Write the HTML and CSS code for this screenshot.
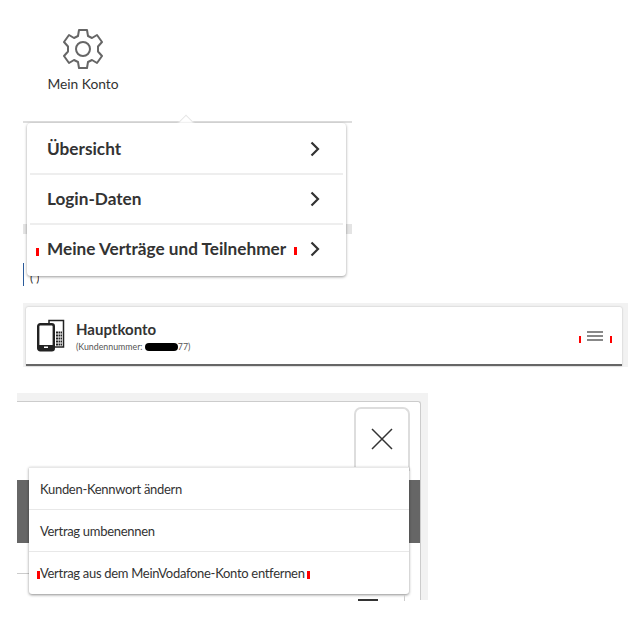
FILE: index.html
```html
<!DOCTYPE html>
<html lang="de">
<head>
  <meta charset="UTF-8">
  <title>Mein Konto</title>
  <link rel="stylesheet" href="styles.css">
</head>
<body>
  <!-- Mein Konto dropdown -->
  <section class="account">
    <div class="account-link">
      <svg class="gear" width="40" height="40" viewBox="0 0 40 40" fill="none" stroke="#666" stroke-width="2" stroke-linejoin="round">
        <path d="M16 1h8l1 6 4 2 5-3 5 7-4 4.500v5l4 4.500-5 7-5-3-4 2-1 6h-8l-1-6-4-2-5 3-5-7 4-4.500v-5l-4-4.500 5-7 5 3 4-2z"/>
        <circle cx="20" cy="20" r="7"/>
      </svg>
      <span class="account-label">Mein Konto</span>
    </div>
    <div class="account-menu-wrap">
      <div class="bg-line bg-line-top"></div>
      <div class="bg-line bg-line-mid"></div>
      <div class="bg-fragment">( )</div>
      <div class="menu-arrow"></div>
      <ul class="account-menu">
        <li class="account-item">
          <span>Übersicht</span>
          <svg class="chevron" width="10" height="16" viewBox="0 0 10 16" fill="none" stroke="#333" stroke-width="2.200"><path d="M1.500 1.500L8 8l-6.500 6.500"/></svg>
        </li>
        <li class="account-item">
          <span>Login-Daten</span>
          <svg class="chevron" width="10" height="16" viewBox="0 0 10 16" fill="none" stroke="#333" stroke-width="2.200"><path d="M1.500 1.500L8 8l-6.500 6.500"/></svg>
        </li>
        <li class="account-item">
          <span class="marked marked-bold">Meine Verträge und Teilnehmer</span>
          <svg class="chevron" width="10" height="16" viewBox="0 0 10 16" fill="none" stroke="#333" stroke-width="2.200"><path d="M1.500 1.500L8 8l-6.500 6.500"/></svg>
        </li>
      </ul>
    </div>
  </section>

  <!-- Hauptkonto row -->
  <section class="contract-bg">
    <div class="contract">
      <svg class="devices" width="30" height="33" viewBox="0 0 30 33" fill="none" stroke="#222">
        <path d="M12 4V1.500h14.500V8" stroke-width="1.500"/>
        <rect x="1.200" y="5.200" width="15.600" height="26" rx="2" stroke-width="2.400"/>
        <rect x="1" y="26" width="16" height="5" rx="1" fill="#222" stroke="none"/>
        <rect x="7" y="27.500" width="4" height="1.500" fill="#fff" stroke="none"/>
        <path d="M26.500 8v20H18" stroke-width="1.500"/>
        <path d="M19 13.500h6M19 16.500h6M19 19.500h6M19 22.500h6M19 25.500h6" stroke-width="2" stroke-dasharray="2 .5"/>
      </svg>
      <div class="contract-text">
        <div class="contract-title">Hauptkonto</div>
        <div class="contract-sub">(Kundennummer: <span class="redacted"></span>77)</div>
      </div>
      <div class="burger">
        <span class="burger-bar"></span>
        <span class="burger-bar"></span>
        <span class="burger-bar"></span>
      </div>
    </div>
  </section>

  <!-- Vertrag menu -->
  <section class="options-bg">
    <div class="options-panel">
      <div class="grey-band"></div>
      <div class="thin-line"></div>
      <div class="close-tab">
        <svg width="22" height="22" viewBox="0 0 22 22" stroke="#333" stroke-width="1.500"><path d="M1 1l20 20M21 1L1 21"/></svg>
      </div>
      <ul class="options-menu">
        <li class="options-item">Kunden-Kennwort ändern</li>
        <li class="options-item">Vertrag umbenennen</li>
        <li class="options-item"><span class="marked">Vertrag aus dem MeinVodafone-Konto entfernen</span></li>
      </ul>
      <div class="cut-icon"></div>
      <div class="cut-line"></div>
    </div>
  </section>
</body>
</html>
```

FILE: styles.css
```css
* {
  margin: 0;
  padding: 0;
  box-sizing: border-box;
}

body {
  background-color: white;
  color: #333;
  font-family: "Lato", sans-serif;
  height: 630px;
  overflow: hidden;
}

ul {
  list-style: none;
}

/* account link */
.account {
  height: 303px;
  padding-top: 29px;
}

.account-link {
  width: 120px;
  margin-left: 23px;
  display: flex;
  flex-direction: column;
  align-items: center;
}

.gear {
  display: block;
}

.account-label {
  font-size: 13.800px;
  line-height: 20px;
  margin-top: 5px;
  color: #333;
}

.account-menu-wrap {
  position: relative;
  margin: 29px 0 0 27px;
  width: 319px;
}

.account-menu {
  position: relative;
  background-color: white;
  border-radius: 4px;
  box-shadow: 0 1px 3px rgba(0, 0, 0, 0.4);
  padding: 0 3px;
}

.menu-arrow {
  position: absolute;
  left: 153px;
  top: -6px;
  width: 12px;
  height: 12px;
  background-color: white;
  border: 1px solid #e6e6e6;
  transform: rotate(45deg);
}

.bg-line {
  position: absolute;
  background-color: #ddd;
}

.bg-line-top {
  left: -4px;
  top: -2px;
  width: 329px;
  height: 2px;
}

.bg-line-mid {
  left: -4px;
  top: 101px;
  width: 329px;
  height: 10px;
  background-color: #e4e4e4;
}

.bg-fragment {
  position: absolute;
  left: -4px;
  top: 140px;
  border-left: 1px solid #2a5a9a;
  padding: 8px 0 0 6px;
  font-size: 12px;
  line-height: 14px;
  height: 23px;
  overflow: hidden;
}

.account-item {
  height: 50px;
  display: flex;
  align-items: center;
  justify-content: space-between;
  padding: 0 23px 0 17px;
  border-top: 2px solid #eee;
  font-size: 17.200px;
  font-weight: 700;
  color: #333;
}

.account-item span {
  margin-bottom: 2px;
}

.account-item:first-child {
  border-top: none;
  padding-top: 2px;
}

.account-item:last-child {
  height: 53px;
  padding-bottom: 3px;
}

/* red marks drawn on the screenshot */
.marked {
  position: relative;
}

.marked::before,
.marked::after {
  content: "";
  position: absolute;
  width: 3px;
  height: 8px;
  background-color: #f00;
  top: 6px;
}

.marked::before {
  left: -3px;
}

.marked::after {
  right: -5px;
}

.marked-bold::before {
  left: -11px;
  top: 10px;
}

.marked-bold::after {
  right: -11px;
  top: 9px;
}

/* Hauptkonto */
.contract-bg {
  margin-left: 23px;
  width: 605px;
  height: 64px;
  background-color: #f2f2f2;
  padding: 4px 6px 0 3px;
}

.contract {
  height: 59px;
  background-color: white;
  border-bottom: 2px solid #666;
  box-shadow: 0 0 2px rgba(0, 0, 0, 0.25);
  border-radius: 2px 2px 0 0;
  display: flex;
  align-items: center;
  padding: 0 10px 0 11px;
}

.devices {
  flex-shrink: 0;
}

.contract-text {
  margin-left: 9px;
  flex: 1;
}

.contract-title {
  font-size: 15px;
  font-weight: 700;
  line-height: 18px;
  color: #333;
}

.contract-sub {
  font-size: 8.800px;
  line-height: 11px;
  margin-top: 3px;
  color: #555;
}

.redacted {
  display: inline-block;
  width: 33px;
  height: 8px;
  border-radius: 4px;
  background-color: black;
  vertical-align: -1px;
}

.burger {
  position: relative;
  width: 16px;
  margin-right: 9px;
  display: flex;
  flex-direction: column;
  gap: 2px;
}

.burger-bar {
  height: 2px;
  background-color: #888;
}

.burger::before,
.burger::after {
  content: "";
  position: absolute;
  top: 5px;
  width: 2px;
  height: 7px;
  background-color: #f00;
}

.burger::before {
  left: -8px;
}

.burger::after {
  right: -9px;
}

/* Vertrag options */
.options-bg {
  margin: 26px 0 0 17px;
  width: 411px;
  height: 207px;
  background-color: #f2f2f2;
  padding-top: 8px;
}

.options-panel {
  position: relative;
  width: 404px;
  height: 199px;
  background-color: white;
  border-top: 1px solid #ccc;
  border-right: 1px solid #ccc;
  border-radius: 0 3px 0 0;
}

.grey-band {
  position: absolute;
  left: 0;
  top: 78px;
  width: 403px;
  height: 63px;
  background-color: #666;
}

.thin-line {
  position: absolute;
  left: 0;
  top: 171px;
  width: 12px;
  height: 1px;
  background-color: #ccc;
}

.close-tab {
  position: absolute;
  left: 337px;
  top: 5px;
  width: 56px;
  height: 64px;
  background-color: white;
  border: 2px solid #ddd;
  border-bottom: none;
  border-radius: 7px 7px 0 0;
  padding: 19px 0 0 15px;
}

.close-tab svg {
  display: block;
}

.options-menu {
  position: absolute;
  left: 12px;
  top: 65px;
  width: 380px;
  height: 127px;
  background-color: white;
  border-top: 1px solid #e8e8e8;
  border-radius: 0 0 3px 3px;
  box-shadow: 0 1px 3px rgba(0, 0, 0, 0.45);
}

.options-item {
  height: 42px;
  padding-left: 11px;
  font-size: 13px;
  letter-spacing: -0.3px;
  line-height: 43px;
  color: #333;
  border-top: 1px solid #e8e8e8;
}

.options-item:first-child {
  height: 41px;
  border-top: none;
}

.cut-icon {
  position: absolute;
  left: 341px;
  top: 197px;
  width: 20px;
  height: 2px;
  background-color: #333;
}

.cut-line {
  position: absolute;
  left: 387px;
  top: 193px;
  width: 1px;
  height: 6px;
  background-color: #ccc;
}
```
